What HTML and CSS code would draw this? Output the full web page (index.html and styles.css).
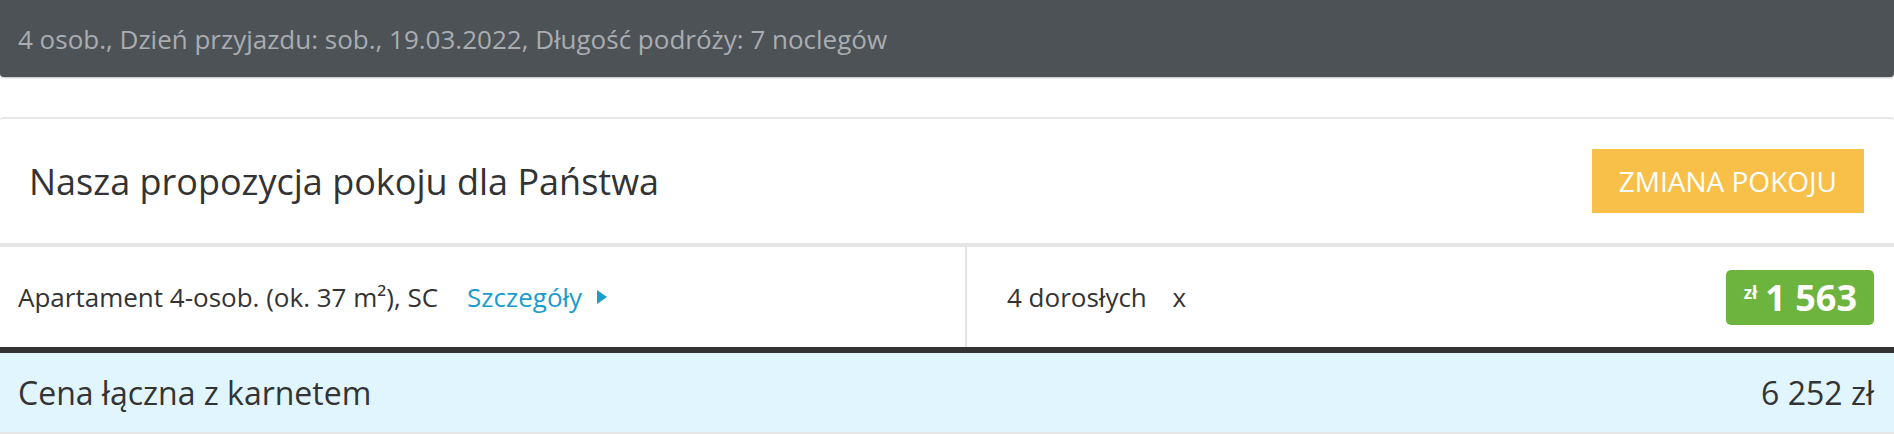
FILE: index.html
```html
<!DOCTYPE html>
<html lang="pl">
<head>
    <meta charset="UTF-8">
    <meta name="viewport" content="width=device-width, initial-scale=1.0">
    <title>Propozycja pokoju</title>
    <link rel="stylesheet" href="styles.css">
</head>
<body>
    <div class="summary-bar">4 osob., Dzień przyjazdu: sob., 19.03.2022, Długość podróży: 7 noclegów</div>

    <div class="offer">
        <div class="offer-head">
            <h2 class="offer-title">Nasza propozycja pokoju dla Państwa</h2>
            <button class="change-btn">Zmiana pokoju</button>
        </div>

        <div class="room-row">
            <div class="room-name">
                Apartament 4-osob. (ok. 37 m²), SC
                <a class="details-link" href="#">Szczegóły
                    <svg class="arrow" width="10" height="14" viewBox="0 0 10 14"><polygon points="0,0 10,7 0,14" fill="currentColor"/></svg>
                </a>
            </div>
            <div class="room-guests">
                <div class="guests">4 dorosłych <span class="times">x</span></div>
                <div class="price-badge"><span class="cur">zł</span><span class="amount">1 563</span></div>
            </div>
        </div>

        <div class="total-row">
            <div class="total-label">Cena łączna z karnetem</div>
            <div class="total-value">6 252 zł</div>
        </div>
    </div>
</body>
</html>
```

FILE: styles.css
```css
/* Ogólne */
body {
    margin: 0;
    font-family: 'Open Sans', 'Liberation Sans', Arial, sans-serif;
    color: #333333;
    background-color: #FFFFFF;
}

/* Pasek z podsumowaniem */
.summary-bar {
    height: 77px;
    display: flex;
    align-items: center;
    padding: 0 18px;
    background-color: #4D5256;
    color: #A9ADB1;
    font-size: 26px;
    border-radius: 0 0 4px 4px;
    box-shadow: 0 1px 2px rgba(0, 0, 0, 0.25);
    margin-bottom: 40px;
}

/* Panel z ofertą */
.offer {
    border-top: 2px solid #E6E6E6;
    border-radius: 4px 4px 0 0;
}

.offer-head {
    height: 124px;
    display: flex;
    align-items: center;
    justify-content: space-between;
    padding: 0 30px 0 29px;
    border-bottom: 4px solid #E6E6E6;
}

.offer-title {
    margin: 0;
    font-size: 36px;
    font-weight: 400;
    color: #333333;
}

.change-btn {
    height: 64px;
    padding: 0 27px;
    background-color: #F9C049;
    color: #FFFFFF;
    border: none;
    font-family: inherit;
    font-size: 28px;
    text-transform: uppercase;
    cursor: pointer;
}

/* Wiersz pokoju */
.room-row {
    display: grid;
    grid-template-columns: 965px 1fr;
    height: 100px;
    border-bottom: 6px solid #333333;
    font-size: 26px;
}

.room-name {
    display: flex;
    align-items: center;
    padding-left: 18px;
}

.details-link {
    display: inline-flex;
    align-items: center;
    margin-left: 29px;
    color: #1B9DCB;
    text-decoration: none;
}

.arrow {
    margin-left: 15px;
}

.room-guests {
    display: flex;
    align-items: center;
    justify-content: space-between;
    padding: 0 20px 0 40px;
    border-left: 2px solid #E6E6E6;
}

.times {
    margin-left: 19px;
}

.price-badge {
    display: flex;
    align-items: center;
    height: 55px;
    padding: 0 17px 0 18px;
    background-color: #6DB43F;
    color: #FFFFFF;
    border-radius: 5px;
    font-weight: 700;
}

.cur {
    font-size: 17px;
    align-self: flex-start;
    margin-top: 11px;
    margin-right: 8px;
}

.amount {
    font-size: 36px;
}

/* Suma */
.total-row {
    display: flex;
    align-items: center;
    justify-content: space-between;
    height: 79px;
    padding: 0 20px 0 18px;
    background-color: #E0F5FD;
    border-bottom: 2px solid #E6E6E6;
    font-size: 32px;
}
```
